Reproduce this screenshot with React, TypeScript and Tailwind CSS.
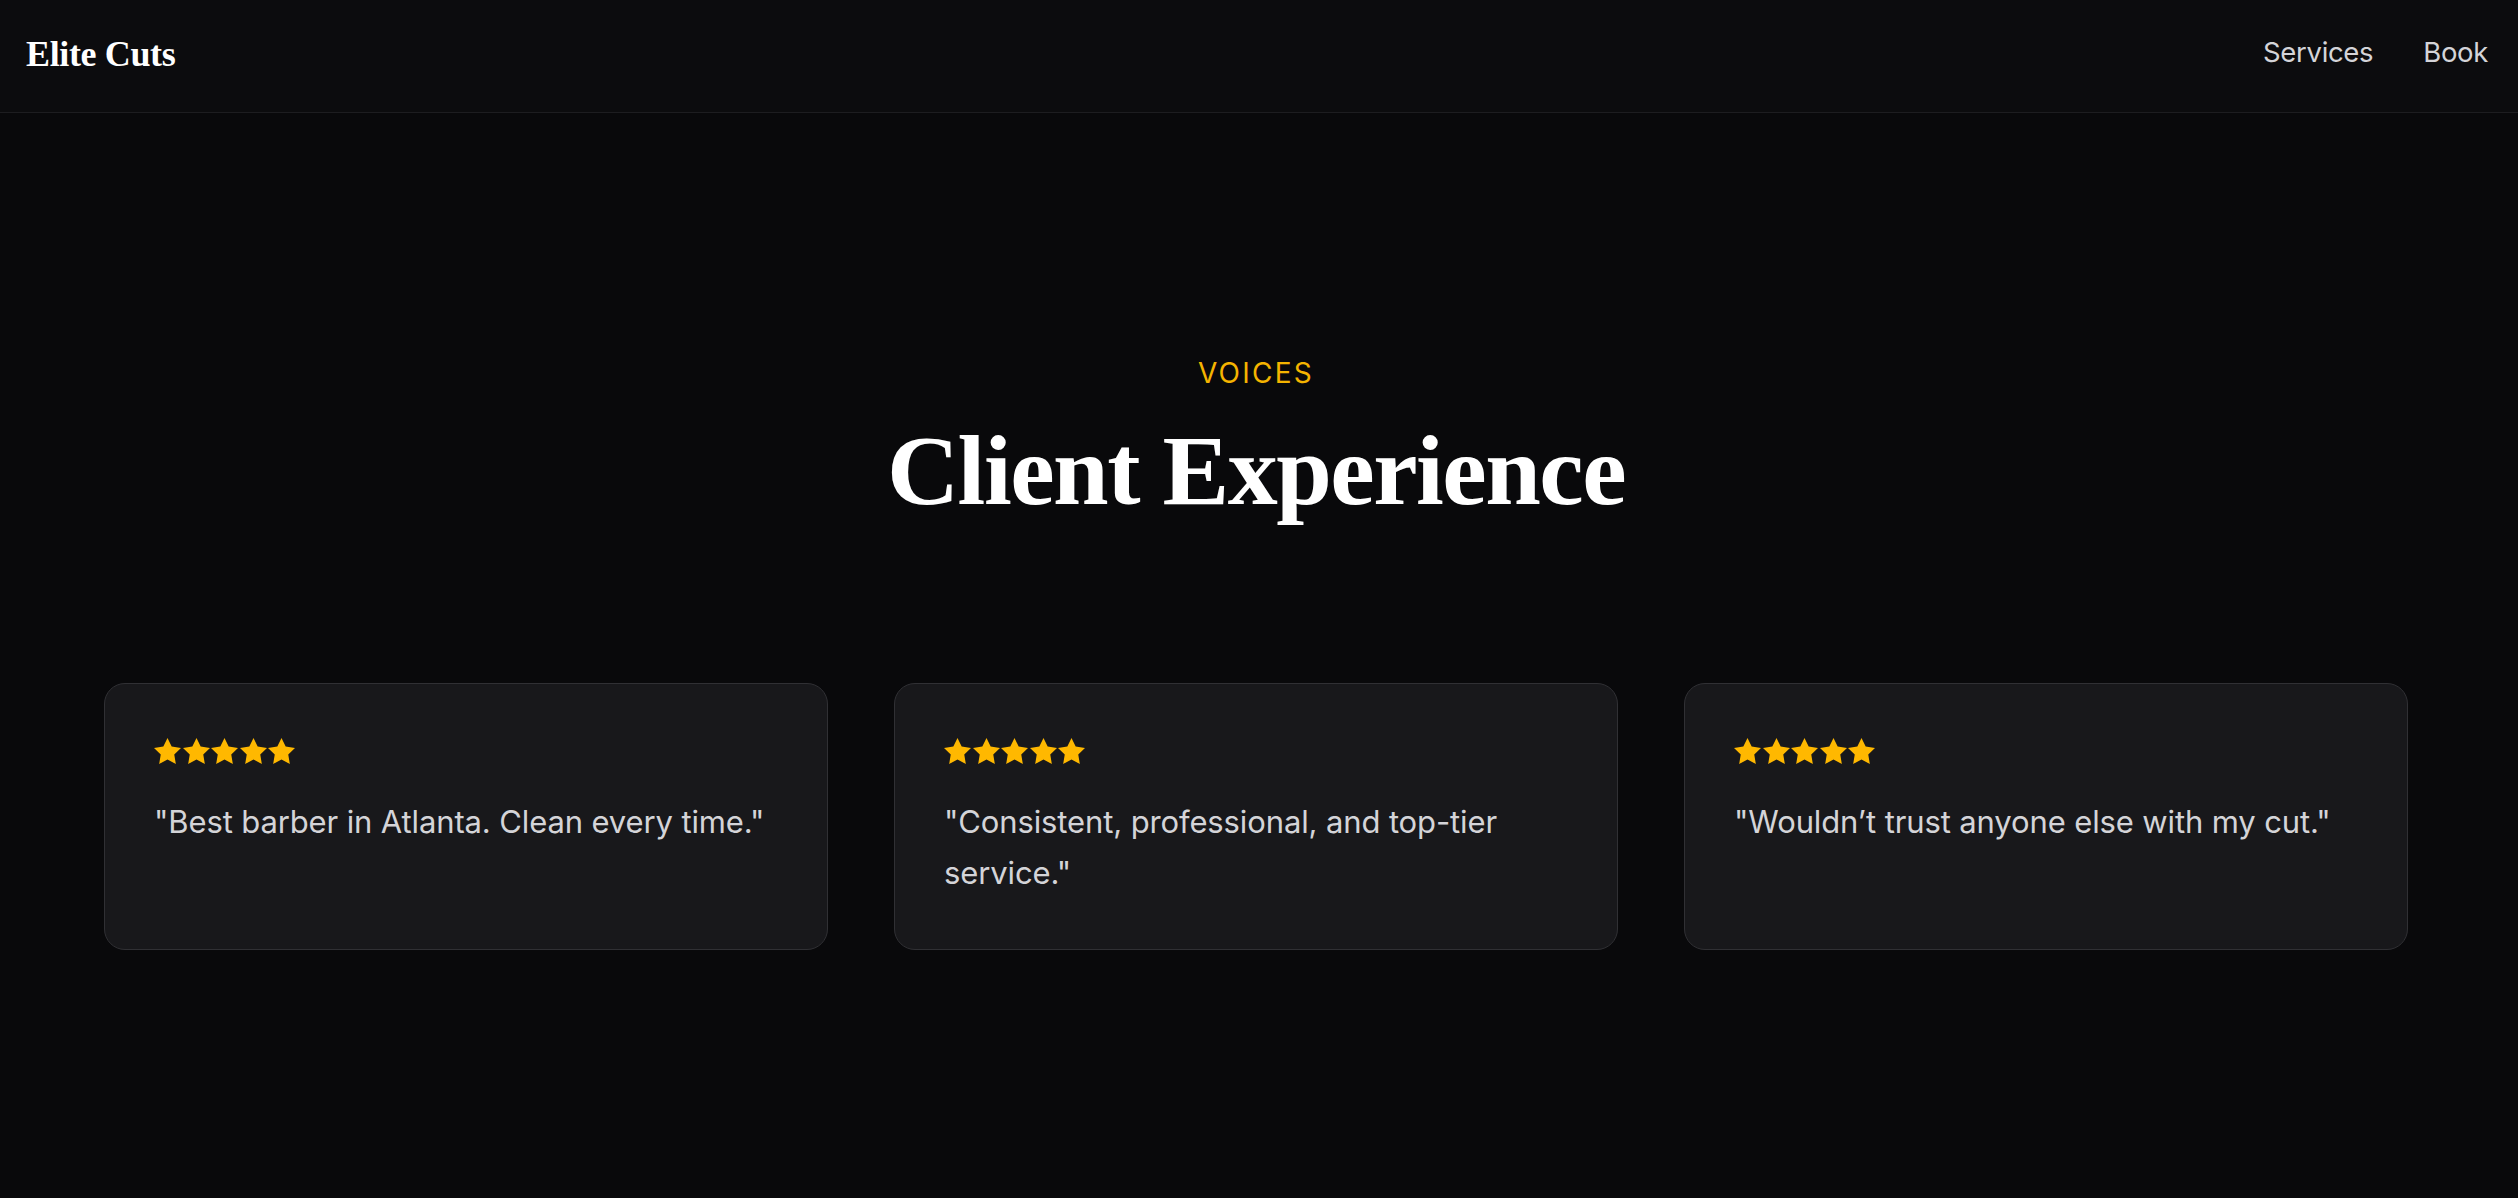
const reviews = [
  '"Best barber in Atlanta. Clean every time."',
  '"Consistent, professional, and top-tier service."',
  '"Wouldn\u2019t trust anyone else with my cut."',
];

function Stars() {
  return (
    <div className="flex gap-[1.5px] mt-[5px] mb-[32px]">
      {[0, 1, 2, 3, 4].map((i) => (
        <svg key={i} width="27" height="26" viewBox="2 2 20 19.1" preserveAspectRatio="none" className="text-[#ffb800]">
          <path
            fill="currentColor"
            d="M12 2l3.09 6.26L22 9.27l-5 4.87 1.18 6.88L12 17.77l-6.18 3.25L7 14.14 2 9.27l6.91-1.01L12 2z"
          />
        </svg>
      ))}
    </div>
  );
}

export default function App() {
  return (
    <div className="min-h-screen bg-[#09090b] text-white font-['Inter',sans-serif]">
      {/* Header */}
      <header className="h-[113px] bg-[#0c0c0e] border-b border-[#1d1d20] flex items-center justify-between px-[26px]">
        <a className="font-['Liberation_Serif',serif] font-bold text-[36px] tracking-[-0.01em] text-white -mt-[5px]">
          Elite Cuts
        </a>
        <nav className="flex items-center gap-[50px] text-[27.5px] tracking-[-0.012em] text-[#d4d4d8] -mt-[6px] pr-[4px]">
          <a>Services</a>
          <a>Book</a>
        </nav>
      </header>

      {/* Testimonials */}
      <section className="pt-[239px] pb-[200px] pr-[6px]">
        <div className="text-center">
          <p className="text-[28px] leading-[42px] tracking-[0.08em] text-[#f5b400]">VOICES</p>
          <h2 className="mt-[22px] font-['Liberation_Serif',serif] font-bold text-[100px] leading-[110px] tracking-[-0.015em] text-white">
            Client Experience
          </h2>
        </div>

        <div className="max-w-[2304px] mx-auto mt-[157px] grid grid-cols-3 gap-[66px]">
          {reviews.map((r, i) => (
            <div key={i} className="bg-[#18181b] border border-[#303034] rounded-[21px] px-[49px] pt-[49px] pb-[51px]">
              <Stars />
              <p className="text-[31px] leading-[51.2px] tracking-[-0.004em] text-[#d4d4d8]">{r}</p>
            </div>
          ))}
        </div>
      </section>
    </div>
  );
}
